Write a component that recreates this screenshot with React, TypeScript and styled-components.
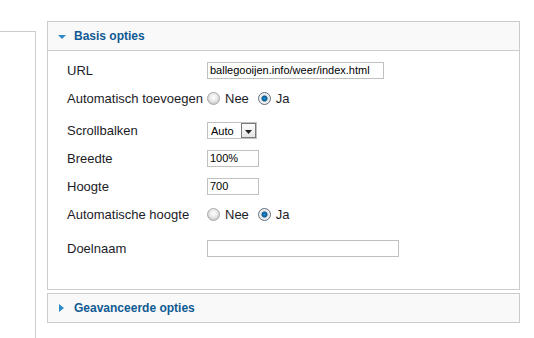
import React from "react";
import styled, { createGlobalStyle } from "styled-components";

const GlobalStyle = createGlobalStyle`
  html, body {
    margin: 0;
    padding: 0;
    background: #fff;
    font-family: "Liberation Sans", Arial, sans-serif;
  }
`;

type RowDef =
  | { label: string; kind: "text"; value: string; width: number; gap?: number; h?: number }
  | { label: string; kind: "radio"; checked: "nee" | "ja"; gap?: number; h?: number }
  | { label: string; kind: "select"; value: string; gap?: number; h?: number };

const rows: RowDef[] = [
  { label: "URL", kind: "text", value: "ballegooijen.info/weer/index.html", width: 177 },
  { label: "Automatisch toevoegen", kind: "radio", checked: "ja" },
  { label: "Scrollbalken", kind: "select", value: "Auto", gap: 5, h: 27 },
  { label: "Breedte", kind: "text", value: "100%", width: 52 },
  { label: "Hoogte", kind: "text", value: "700", width: 52 },
  { label: "Automatische hoogte", kind: "radio", checked: "ja" },
  { label: "Doelnaam", kind: "text", value: "", width: 192, gap: 6 },
];

export default function App() {
  return (
    <>
      <GlobalStyle />
      <Page>
        <SidePanel />
        <Main>
          <Panel>
            <PanelHeader>
              <Arrow $open />
              <Title>Basis opties</Title>
            </PanelHeader>
            <PanelBody>
              {rows.map((row) => (
                <Row key={row.label} $gap={row.gap ?? 0} $h={row.h ?? 28}>
                  <Label>{row.label}</Label>
                  {row.kind === "text" && (
                    <TextInput $w={row.width} defaultValue={row.value} />
                  )}
                  {row.kind === "select" && (
                    <Select>
                      <SelectValue>{row.value}</SelectValue>
                      <SelectButton>
                        <svg width="7" height="4" viewBox="0 0 7 4">
                          <path d="M0 0h7L3.5 4z" fill="#222" />
                        </svg>
                      </SelectButton>
                    </Select>
                  )}
                  {row.kind === "radio" && (
                    <RadioGroup>
                      <RadioOption>
                        <Radio $checked={row.checked === "nee"} />
                        Nee
                      </RadioOption>
                      <RadioOption>
                        <Radio $checked={row.checked === "ja"} />
                        Ja
                      </RadioOption>
                    </RadioGroup>
                  )}
                </Row>
              ))}
            </PanelBody>
          </Panel>
          <Panel>
            <PanelHeader $closed>
              <Arrow />
              <Title>Geavanceerde opties</Title>
            </PanelHeader>
          </Panel>
        </Main>
      </Page>
    </>
  );
}

const Page = styled.div`
  display: flex;
  align-items: flex-start;
  width: 534px;
  height: 338px;
  overflow: hidden;
`;

const SidePanel = styled.div`
  box-sizing: border-box;
  margin-top: 31px;
  width: 36px;
  height: 307px;
  border-top: 1px solid #cccccc;
  border-right: 1px solid #cccccc;
`;

const Main = styled.div`
  margin-left: 11px;
  margin-top: 21px;
  width: 473px;
  display: flex;
  flex-direction: column;
  gap: 3px;
`;

const Panel = styled.div`
  box-sizing: border-box;
  border: 1px solid #cccccc;
  background: #fff;
`;

const PanelHeader = styled.div<{ $closed?: boolean }>`
  height: 28px;
  display: flex;
  align-items: center;
  padding-left: 10px;
  background: #f9f9f9;
  border-bottom: ${(p) => (p.$closed ? "none" : "1px solid #cccccc")};
`;

const Arrow = styled.span<{ $open?: boolean }>`
  width: 0;
  height: 0;
  margin-right: ${(p) => (p.$open ? "8px" : "10px")};
  margin-left: ${(p) => (p.$open ? "0" : "1px")};
  border-style: solid;
  border-color: transparent;
  ${(p) =>
    p.$open
      ? `border-width: 4px 4px 0 4px; border-top-color: #2d8ac7; margin-top: 2px;`
      : `border-width: 4px 0 4px 5px; border-left-color: #2d8ac7;`}
`;

const Title = styled.span`
  font-size: 12px;
  font-weight: bold;
  color: #0f5a93;
`;

const PanelBody = styled.div`
  height: 238px;
  padding: 5px 0 0 19px;
  box-sizing: border-box;
`;

const Row = styled.div<{ $gap: number; $h: number }>`
  display: flex;
  align-items: center;
  height: ${(p) => p.$h}px;
  margin-top: ${(p) => p.$gap}px;
`;

const Label = styled.span`
  width: 140px;
  flex: none;
  font-size: 13px;
  color: #1c1c28;
  white-space: nowrap;
`;

const TextInput = styled.input<{ $w: number }>`
  box-sizing: border-box;
  width: ${(p) => p.$w}px;
  height: 17px;
  border: 1px solid #c0c0c0;
  padding: 0 2px;
  margin: 0;
  font-family: "Liberation Sans", Arial, sans-serif;
  font-size: 11px;
  color: #000;
  outline: none;
`;

const Select = styled.div`
  box-sizing: border-box;
  width: 50px;
  height: 17px;
  border: 1px solid #c0c0c0;
  display: flex;
  align-items: center;
  justify-content: space-between;
  padding-left: 3px;
`;

const SelectValue = styled.span`
  font-size: 11px;
  color: #000;
`;

const SelectButton = styled.span`
  box-sizing: border-box;
  width: 15px;
  height: 15px;
  border: 1px solid #7a7a7a;
  background: linear-gradient(#fdfdfd, #e4e4e4);
  display: flex;
  align-items: center;
  justify-content: center;
  padding-top: 2px;
`;

const RadioGroup = styled.div`
  display: flex;
  align-items: center;
  gap: 9px;
`;

const RadioOption = styled.label`
  display: flex;
  align-items: center;
  gap: 5px;
  font-size: 13px;
  color: #1c1c28;
`;

const Radio = styled.span<{ $checked: boolean }>`
  box-sizing: border-box;
  width: 13px;
  height: 13px;
  border-radius: 50%;
  border: 1px solid ${(p) => (p.$checked ? "#5d6f80" : "#a8a8a8")};
  background: ${(p) =>
    p.$checked
      ? "radial-gradient(circle at 50% 50%, #1d8fd0 0, #0a5a95 2.5px, #e6e6e6 3.5px, #f6f6f6 6px)"
      : "radial-gradient(circle at 50% 40%, #ffffff 0, #e8e8e8 4px, #cfcfcf 6px)"};
`;
